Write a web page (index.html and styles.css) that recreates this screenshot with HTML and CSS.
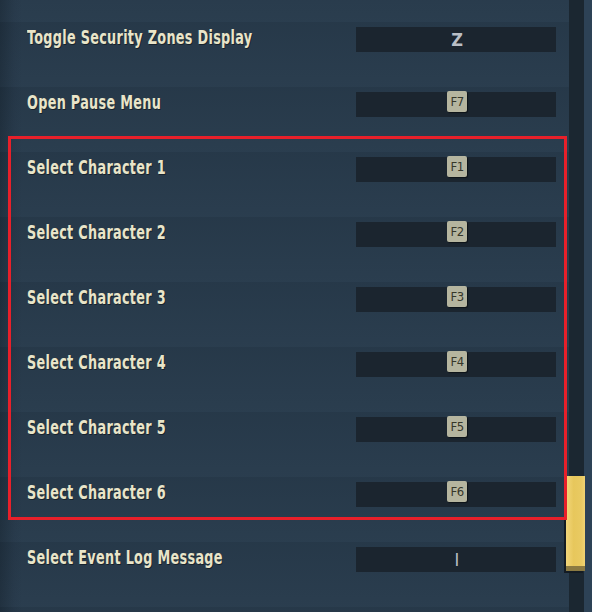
FILE: index.html
```html
<!DOCTYPE html>
<html lang="en">
<head>
    <meta charset="UTF-8">
    <title>Key Bindings</title>
    <link rel="stylesheet" href="styles.css">
</head>
<body>

    <div class="panel">
        <!-- Bindings list -->
        <div class="bindings">
            <div class="binding-row">
                <span class="binding-label">Toggle Character Highlight</span>
                <div class="key-slot"><span class="key-text">H</span></div>
            </div>
            <div class="binding-row">
                <span class="binding-label">Toggle Security Zones Display</span>
                <div class="key-slot"><span class="key-text">Z</span></div>
            </div>
            <div class="binding-row">
                <span class="binding-label">Open Pause Menu</span>
                <div class="key-slot"><span class="keycap">F7</span></div>
            </div>
            <div class="binding-row">
                <span class="binding-label">Select Character 1</span>
                <div class="key-slot"><span class="keycap">F1</span></div>
            </div>
            <div class="binding-row">
                <span class="binding-label">Select Character 2</span>
                <div class="key-slot"><span class="keycap">F2</span></div>
            </div>
            <div class="binding-row">
                <span class="binding-label">Select Character 3</span>
                <div class="key-slot"><span class="keycap">F3</span></div>
            </div>
            <div class="binding-row">
                <span class="binding-label">Select Character 4</span>
                <div class="key-slot"><span class="keycap">F4</span></div>
            </div>
            <div class="binding-row">
                <span class="binding-label">Select Character 5</span>
                <div class="key-slot"><span class="keycap">F5</span></div>
            </div>
            <div class="binding-row">
                <span class="binding-label">Select Character 6</span>
                <div class="key-slot"><span class="keycap">F6</span></div>
            </div>
            <div class="binding-row">
                <span class="binding-label">Select Event Log Message</span>
                <div class="key-slot"><span class="key-text key-thin">I</span></div>
            </div>
            <div class="binding-row">
                <span class="binding-label">Toggle Event Log</span>
                <div class="key-slot"><span class="key-text">L</span></div>
            </div>
        </div>

        <!-- Scrollbar -->
        <div class="scroll-track">
            <div class="scroll-thumb"></div>
        </div>
        <div class="scroll-edge"></div>

        <!-- Highlight frame -->
        <div class="highlight-frame"></div>
    </div>

</body>
</html>
```

FILE: styles.css
```css
body {
    margin: 0;
    padding: 0;
    background: #293c4d;
    overflow: hidden;
    font-family: "DejaVu Sans Condensed", "DejaVu Sans", sans-serif;
}

.panel {
    position: relative;
    display: flex;
    width: 592px;
    height: 612px;
    overflow: hidden;
    background: linear-gradient(90deg, #1f2f3d 0px, #27394a 14px, #293c4d 22px);
}

.bindings {
    width: 569px;
    margin-top: -43px;
    display: flex;
    flex-direction: column;
}

.binding-row {
    flex-shrink: 0;
    height: 65px;
    box-sizing: border-box;
    padding: 4px 13px 0 27px;
    display: flex;
    align-items: flex-start;
    justify-content: space-between;
    background: linear-gradient(180deg, rgba(20, 32, 44, 0.12), rgba(60, 80, 100, 0.08));
}

.binding-label {
    display: inline-block;
    transform: scaleX(0.75);
    transform-origin: left top;
    white-space: nowrap;
    color: #e9e5c9;
    font-size: 19px;
    font-weight: bold;
    letter-spacing: 0.4px;
    line-height: 22px;
    text-shadow: 1px 1px 0 #16212b;
}

.key-slot {
    margin-top: 1px;
    width: 200px;
    height: 25px;
    background: #1b252f;
    display: flex;
    justify-content: center;
    align-items: flex-start;
}

.key-text {
    color: #b9bec6;
    font-size: 18px;
    font-weight: bold;
    line-height: 25px;
    margin-left: 2px;
}

.key-thin {
    font-weight: normal;
}

.keycap {
    width: 20px;
    height: 21px;
    margin: -1px 0 0 2px;
    background: #b5b59f;
    border-radius: 2px;
    box-shadow: 1px 1px 1px rgba(0, 0, 0, 0.5);
    color: #35372a;
    font-size: 13px;
    line-height: 21px;
    text-align: center;
    letter-spacing: -0.5px;
}

.scroll-track {
    position: relative;
    width: 15px;
    background: #1b2731;
}

.scroll-edge {
    width: 8px;
    background: #2d4256;
}

.scroll-thumb {
    position: absolute;
    top: 476px;
    left: -3px;
    width: 19px;
    height: 95px;
    box-sizing: border-box;
    background: linear-gradient(90deg, #f2d67a, #e7c75c 40%, #e9ca62 80%, #f0d374);
    border-bottom: 5px solid #8b7a42;
    box-shadow: -2px 2px 0 #141c24;
}

.highlight-frame {
    position: absolute;
    left: 8px;
    top: 136px;
    width: 559px;
    height: 384px;
    box-sizing: border-box;
    border: 3px solid #e8202a;
}
```
